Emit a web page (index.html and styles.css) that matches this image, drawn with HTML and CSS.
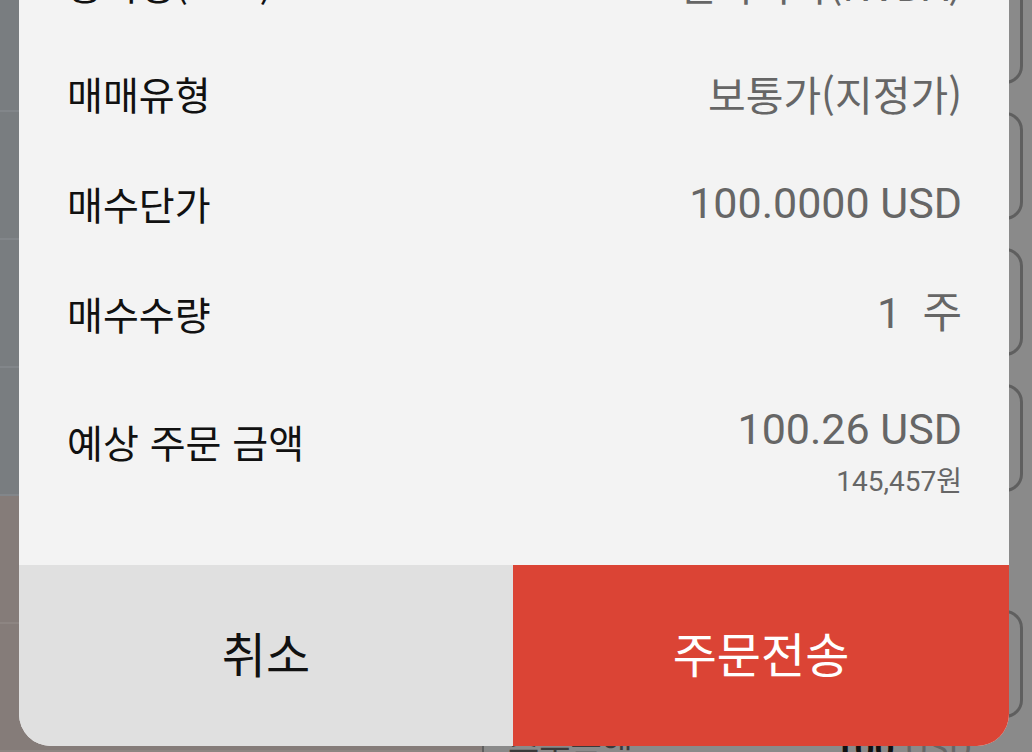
FILE: index.html
```html
<!DOCTYPE html>
<html lang="ko">
<head>
    <meta charset="UTF-8">
    <meta name="viewport" content="width=device-width, initial-scale=1.0">
    <title>주문 확인</title>
    <link rel="stylesheet" href="styles.css">
</head>
<body>
    <div class="screen">
        <!-- underlying order page, dimmed by the dialog -->
        <div class="under">
            <div class="under-side">
                <div class="side-row first"></div>
                <div class="side-row"></div>
                <div class="side-row"></div>
                <div class="side-row"></div>
                <div class="side-row warm"></div>
                <div class="side-row warm"></div>
            </div>
            <div class="under-boxes">
                <div class="field first"></div>
                <div class="field"></div>
                <div class="field"></div>
                <div class="field"></div>
                <div class="field-arrow"></div>
                <div class="field"></div>
            </div>
            <div class="under-total">
                <span class="total-label">주문금액</span>
                <span class="total-value">100 <em>USD</em></span>
            </div>
        </div>

        <div class="dialog">
            <div class="dialog-body">
                <div class="row">
                    <span class="label">종목명(코드)</span>
                    <span class="value">엔비디아(NVDA)</span>
                </div>
                <div class="row">
                    <span class="label">매매유형</span>
                    <span class="value">보통가(지정가)</span>
                </div>
                <div class="row">
                    <span class="label">매수단가</span>
                    <span class="value num">100.0000 USD</span>
                </div>
                <div class="row">
                    <span class="label">매수수량</span>
                    <span class="value num">1&nbsp;&nbsp;주</span>
                </div>
                <div class="row total">
                    <span class="label">예상 주문 금액</span>
                    <div class="value-stack">
                        <span class="value num">100.26 USD</span>
                        <span class="sub">145,457원</span>
                    </div>
                </div>
            </div>
            <div class="actions">
                <button class="btn cancel">취소</button>
                <button class="btn send">주문전송</button>
            </div>
        </div>
    </div>
</body>
</html>
```

FILE: styles.css
```css
body {
    margin: 0;
    padding: 0;
    font-family: "Noto Sans CJK KR", "Noto Sans", sans-serif;
    background-color: #8a8a8a;
    overflow: hidden;
}

.screen {
    position: relative;
    width: 1032px;
    height: 752px;
    overflow: hidden;
    background-color: #8a8a8a;
}

/* underlying page */

.under {
    position: relative;
    width: 100%;
    height: 100%;
}

.under-side {
    display: flex;
    flex-direction: column;
    width: 482px;
    margin-top: -16px;
}

    .side-row {
        height: 126px;
        background-color: #797d80;
        border-bottom: 2px solid #82868a;
    }

        .side-row.warm {
            background-color: #857c79;
            border-bottom-color: #8d8582;
        }

.under-boxes {
    position: absolute;
    top: -8px;
    right: 9px;
    display: flex;
    flex-direction: column;
    gap: 28px;
}

    .field {
        width: 60px;
        height: 102px;
        border: 3px solid #5f5f5f;
        border-left: none;
        border-radius: 0 18px 18px 0;
    }

    .field-arrow {
        width: 0;
        height: 0;
        margin: 40px 0 10px 1px;
        border-top: 6px solid transparent;
        border-bottom: 6px solid transparent;
        border-left: 8px solid #5f5f5f;
        align-self: flex-start;
    }

.under-total {
    position: absolute;
    left: 482px;
    right: 0;
    top: 742px;
    height: 60px;
    border-left: 2px solid #5f5f5f;
    display: flex;
    justify-content: space-between;
    padding: 0 60px 0 24px;
    font-size: 34px;
    line-height: 40px;
    color: #3a3a3a;
}

    .total-value {
        color: #111;
        font-weight: bold;
    }

        .total-value em {
            font-style: normal;
            font-weight: normal;
            color: #666;
        }

/* dialog */

.dialog {
    position: absolute;
    left: 19px;
    width: 990px;
    bottom: 6px;
    background-color: #f3f3f3;
    border-radius: 0 0 32px 32px;
    overflow: hidden;
}

.dialog-body {
    padding: 0 47px 0 48px;
}

.row {
    display: flex;
    justify-content: space-between;
    align-items: center;
    height: 110px;
}

    .row.total {
        height: 197px;
        align-items: flex-start;
        padding-top: 36px;
        box-sizing: border-box;
    }

        .row.total .label {
            margin-top: 12px;
        }

.label {
    font-size: 39px;
    color: #111;
    line-height: 50px;
}

.value {
    font-size: 41px;
    color: #666;
    line-height: 50px;
}

    .value.num {
        font-family: Roboto, "Noto Sans CJK KR", sans-serif;
        font-size: 43px;
    }

.value-stack {
    display: flex;
    flex-direction: column;
    align-items: flex-end;
}

.sub {
    font-family: Roboto, "Noto Sans CJK KR", sans-serif;
    font-size: 28px;
    color: #666;
    line-height: 40px;
    margin-top: 8px;
}

.actions {
    display: flex;
    height: 181px;
}

.btn {
    border: none;
    margin: 0;
    padding: 0 0 8px 0;
    font-family: "Noto Sans CJK KR", sans-serif;
    font-size: 48px;
    cursor: pointer;
}

    .btn.cancel {
        width: 494px;
        background-color: #e0e0e0;
        color: #111;
    }

    .btn.send {
        flex: 1;
        background-color: #db4435;
        color: #fff;
    }
```
